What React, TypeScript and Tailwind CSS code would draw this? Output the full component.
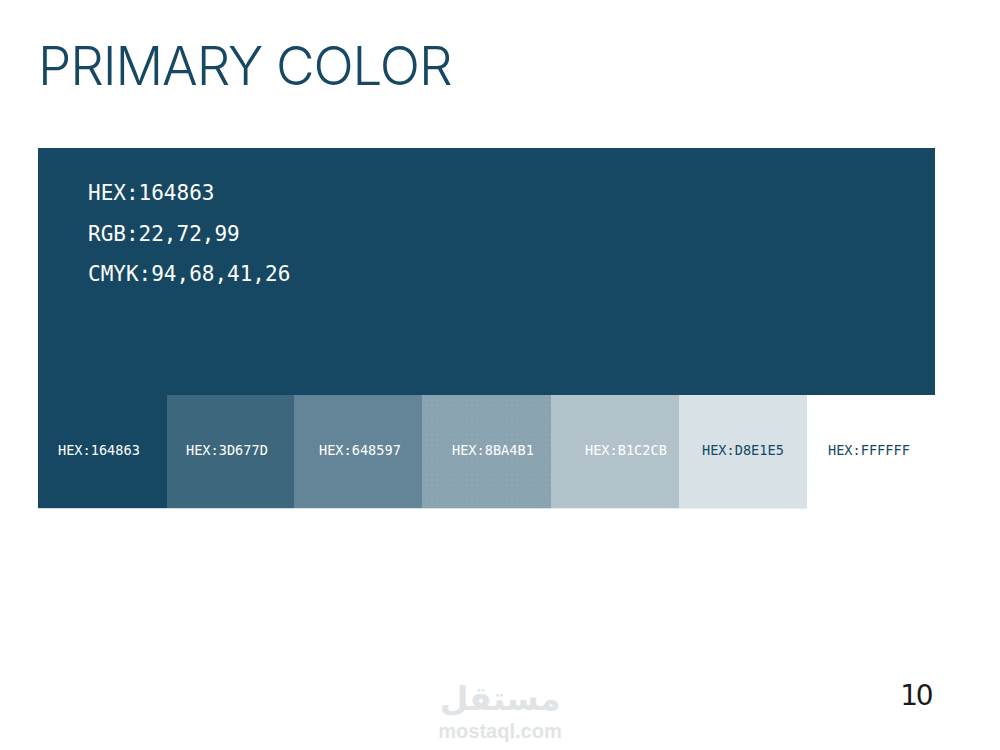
const mono = "font-['DejaVu_Sans_Mono','Liberation_Mono',monospace]";

interface Swatch {
  hex: string;
  className: string;
}

const swatches: Swatch[] = [
  { hex: '164863', className: 'w-[129px] pl-[20px] bg-[#164863] text-white border-[#cfd9df]' },
  { hex: '3D677D', className: 'w-[127px] pl-[19px] bg-[#3d677d] text-white border-[#cfd9df]' },
  { hex: '648597', className: 'w-[128px] pl-[25px] bg-[#648597] text-white border-[#dbe3e7]' },
  {
    hex: '8BA4B1',
    className:
      'w-[129px] pl-[30px] bg-[#8ba4b1] bg-[radial-gradient(#829cab_0.6px,transparent_0.8px)] bg-[length:5px_5px] text-white border-[#dbe3e7]',
  },
  { hex: 'B1C2CB', className: 'w-[128px] pl-[34px] bg-[#b1c2cb] text-white border-[#e6ebee]' },
  { hex: 'D8E1E5', className: 'w-[128px] pl-[23px] bg-[#d8e1e5] text-[#164863] border-[#e6ebee]' },
  { hex: 'FFFFFF', className: 'w-[128px] pl-[21px] bg-white text-[#164863] border-white' },
];

export default function App() {
  return (
    <div className="w-[1000px] h-[750px] bg-white overflow-hidden flex flex-col pl-[38px] pr-[65px]">
      <h1 className="mt-[32px] h-[68px] text-[53px] leading-[68px] font-light tracking-[-1.1px] text-[#164863] font-['Inter',sans-serif]">
        PRIMARY COLOR
      </h1>

      <section className={`mt-[48px] h-[247px] bg-[#164863] pt-[25px] pl-[50px] text-white text-[21px] leading-[40.5px] ${mono}`}>
        <p>HEX:164863</p>
        <p>RGB:22,72,99</p>
        <p>CMYK:94,68,41,26</p>
      </section>

      <div className="flex h-[114px]">
        {swatches.map((s) => (
          <div
            key={s.hex}
            className={`h-[114px] flex items-center pb-[2px] border-b text-[13.6px] ${mono} ${s.className}`}
          >
            HEX:{s.hex}
          </div>
        ))}
      </div>

      <footer className="mt-[168px] grid grid-cols-[402px_120px_1fr] items-start">
        <div />
        <div className="flex flex-col items-center text-[#e0e4e6]">
          <span className="h-[44px] text-[33px] leading-[44px] font-bold whitespace-nowrap font-['DejaVu_Sans',sans-serif]" dir="rtl">
            مستقل
          </span>
          <span className="text-[20px] leading-[20px] font-bold font-['Liberation_Sans',sans-serif]">
            mostaql.com
          </span>
        </div>
        <div className="pt-[1px] pr-[4px] text-right text-[28px] leading-[36px] tracking-[-2.5px] text-[#1a1a1a] font-['DejaVu_Sans',sans-serif]">
          10
        </div>
      </footer>
    </div>
  );
}
